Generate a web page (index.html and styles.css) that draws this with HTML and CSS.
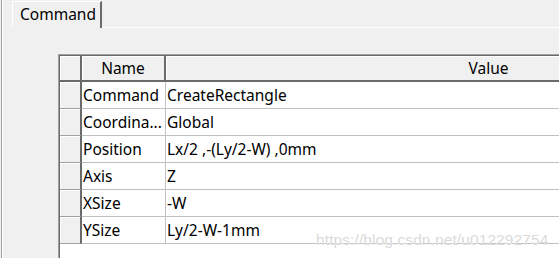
FILE: index.html
```html
<!DOCTYPE html>
<html lang="en">
<head>
    <meta charset="UTF-8">
    <title>Command</title>
    <link rel="stylesheet" href="styles.css">
</head>
<body>
    <div class="window">
        <div class="tabbar">
            <div class="tab">Command</div>
            <div class="tab-rest"></div>
        </div>
        <div class="page">
            <div class="grid">
                <table>
                    <tr class="head">
                        <th class="corner"></th>
                        <th class="name">Name</th>
                        <th class="value">Value</th>
                    </tr>
                    <tr><td class="rh"></td><td class="name">Command</td><td>CreateRectangle</td></tr>
                    <tr><td class="rh"></td><td class="name">Coordina...</td><td>Global</td></tr>
                    <tr><td class="rh"></td><td class="name">Position</td><td>Lx/2 ,-(Ly/2-W) ,0mm</td></tr>
                    <tr><td class="rh"></td><td class="name">Axis</td><td>Z</td></tr>
                    <tr><td class="rh"></td><td class="name">XSize</td><td>-W</td></tr>
                    <tr><td class="rh"></td><td class="name">YSize</td><td>Ly/2-W-1mm</td></tr>
                </table>
            </div>
        </div>
        <div class="watermark">https://blog.csdn.net/u012292754</div>
    </div>
</body>
</html>
```

FILE: styles.css
```css
html, body {
    margin: 0;
    padding: 0;
    width: 559px;
    height: 258px;
    overflow: hidden;
    background: #f0f0f0;
    font-family: "Noto Sans", sans-serif;
    font-size: 15.5px;
    color: #000;
}
.window {
    position: relative;
    margin-left: 1px;
    height: 258px;
    overflow: hidden;
    border-left: 1px solid #a0a0a0;
    box-shadow: inset 1px 0 0 #fff;
}
.tabbar {
    display: flex;
    padding-top: 1px;
    padding-left: 10px;
}
.tab {
    width: 80px;
    height: 26px;
    padding-left: 7px;
    line-height: 25px;
    border-top: 1px solid #fff;
    border-left: 1px solid #fff;
    border-right: 2px solid #6a6a6a;
    background: #f0f0f0;
}
.tab-rest {
    flex: 1;
    border-bottom: 1px solid #fff;
}
.page {
    padding-left: 56px;
    padding-top: 26px;
}
.grid {
    height: 203px;
    overflow: hidden;
    background: #fff;
    border-top: 1px solid #a0a0a0;
    border-left: 1px solid #a0a0a0;
    box-shadow: inset 1px 1px 0 #6a6a6a;
    padding: 1px 0 0 1px;
}
table {
    border-collapse: separate;
    border-spacing: 0;
    table-layout: fixed;
    width: 751px;
}
th, td {
    padding: 0 0 0 1px;
    height: 26px;
    white-space: nowrap;
    overflow: hidden;
    text-align: left;
    font-weight: normal;
}
td {
    border-bottom: 1px solid #c0c0c0;
}
.head th {
    height: 24px;
    background: #f0f0f0;
    text-align: center;
    padding: 0;
    border-bottom: 2px solid #6a6a6a;
    box-shadow: inset 1px 1px 0 #fff;
}
.head .corner {
    width: 20px;
    border-right: 2px solid #6a6a6a;
}
.head .name {
    width: 82px;
    border-right: 2px solid #6a6a6a;
}
.rh {
    width: 18px;
    padding: 0;
    background: #f0f0f0;
    border-right: 2px solid #6a6a6a;
    border-bottom: 1px solid #a0a0a0;
    box-shadow: inset 1px 1px 0 #fff;
}
td.name {
    border-right: 1px solid #c0c0c0;
}
.watermark {
    position: absolute;
    left: 314px;
    top: 231px;
    font-family: "Liberation Sans", Arial, sans-serif;
    font-size: 15.5px;
    letter-spacing: 0.1px;
    color: #dadada;
    text-shadow: 0 0 1px #fff;
}
```
